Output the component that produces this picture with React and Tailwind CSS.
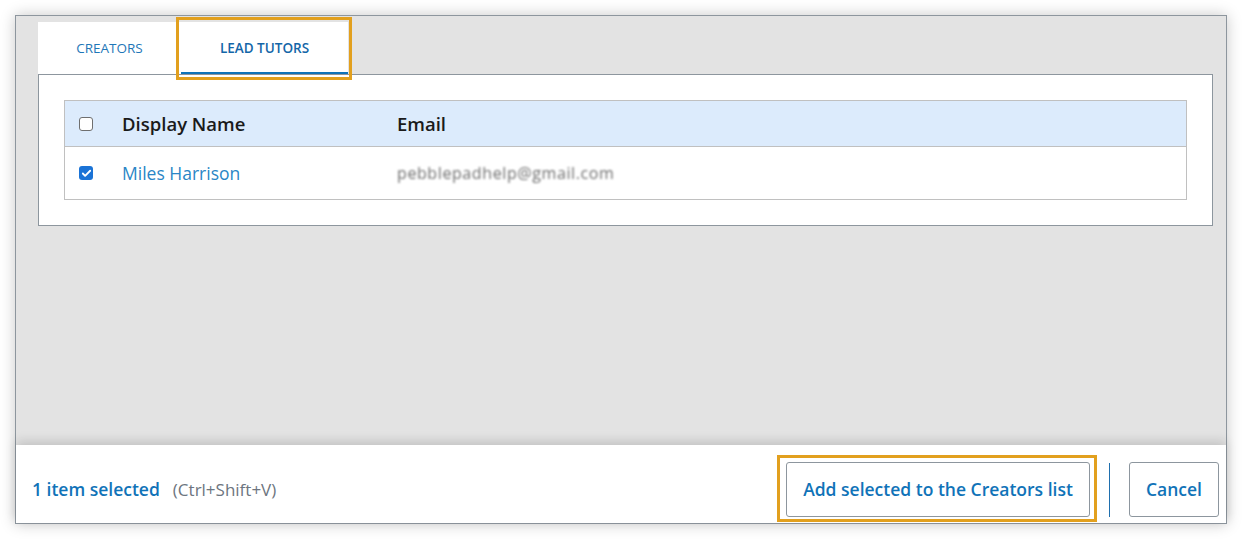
import { Check } from 'lucide-react'

const font = { fontFamily: '"Open Sans", "Noto Sans", sans-serif' }

function Box({ checked }) {
  if (checked) {
    return (
      <span className="flex h-[14px] w-[14px] items-center justify-center rounded-[3px] bg-[#1a73d6]">
        <Check size={11} strokeWidth={4} className="text-white" />
      </span>
    )
  }
  return <span className="block h-[14px] w-[14px] rounded-[3px] border-[1.5px] border-[#6f6f6f] bg-white" />
}

export default function App() {
  return (
    <div className="min-h-screen bg-white pl-[15px] pt-[15px]" style={font}>
      <div className="flex h-[509px] w-[1212px] flex-col border border-[#8d969e] bg-[#e3e3e3] shadow-[0_0_14px_rgba(0,0,0,0.22)]">
        <div className="flex-1 pl-[22px] pr-[13px] pt-[6px]">
          <div className="flex">
            <div className="flex h-[52px] w-[143px] items-center justify-center bg-white text-[13.5px] text-[#1f77b8]">
              CREATORS
            </div>
            <div className="relative flex h-[52px] w-[167px] items-center justify-center bg-white text-[13.5px] font-semibold text-[#1466a8]">
              LEAD TUTORS
              <div className="absolute bottom-0 left-0 right-0 h-[2px] bg-[#0f73b9]" />
              <div className="absolute -bottom-[6px] -left-[5px] -right-[4px] -top-[5px] border-[3px] border-[#e2a01e]" />
            </div>
          </div>
          <div className="border border-[#8d969e] bg-white p-[25px]">
            <div className="border border-[#c0c0c0]">
              <div className="flex h-[45px] items-center bg-[#dcebfc] text-[18.5px] font-semibold text-[#1a1a1a]">
                <div className="w-[57px] pl-[14px]"><Box /></div>
                <div className="w-[275px]">Display Name</div>
                <div>Email</div>
              </div>
              <div className="flex h-[53px] items-center border-t border-[#c0c0c0] text-[17.5px]">
                <div className="w-[57px] pl-[14px]"><Box checked /></div>
                <div className="w-[275px] text-[#2a86c6]">Miles Harrison</div>
                <div className="text-[16px] tracking-[0.6px] text-[#6e6e6e] blur-[1.2px]">pebblepadhelp@gmail.com</div>
              </div>
            </div>
          </div>
        </div>
        <div className="relative flex h-[78px] items-center bg-white pb-[6px] pl-[16px] pr-[7px] pt-[17px] shadow-[0_-4px_10px_rgba(0,0,0,0.14)]">
          <span className="text-[17.5px] font-semibold text-[#1073b8]">1 item selected</span>
          <span className="ml-[13px] text-[17px] text-[#6d7580]">(Ctrl+Shift+V)</span>
          <div className="ml-auto flex items-center">
            <div className="relative">
              <button className="h-[55px] w-[304px] rounded-[3px] border border-[#8d969e] bg-white text-[17.5px] font-semibold text-[#1073b8]">
                Add selected to the Creators list
              </button>
              <div className="pointer-events-none absolute -bottom-[5px] -left-[9px] -right-[7px] -top-[7px] border-[3px] border-[#e2a01e]" />
            </div>
            <div className="ml-[19px] h-[54px] w-px bg-[#1f6fae]" />
            <button className="ml-[19px] h-[55px] w-[90px] rounded-[3px] border border-[#8d969e] bg-white text-[17.5px] font-semibold text-[#1073b8]">
              Cancel
            </button>
          </div>
        </div>
      </div>
    </div>
  )
}
